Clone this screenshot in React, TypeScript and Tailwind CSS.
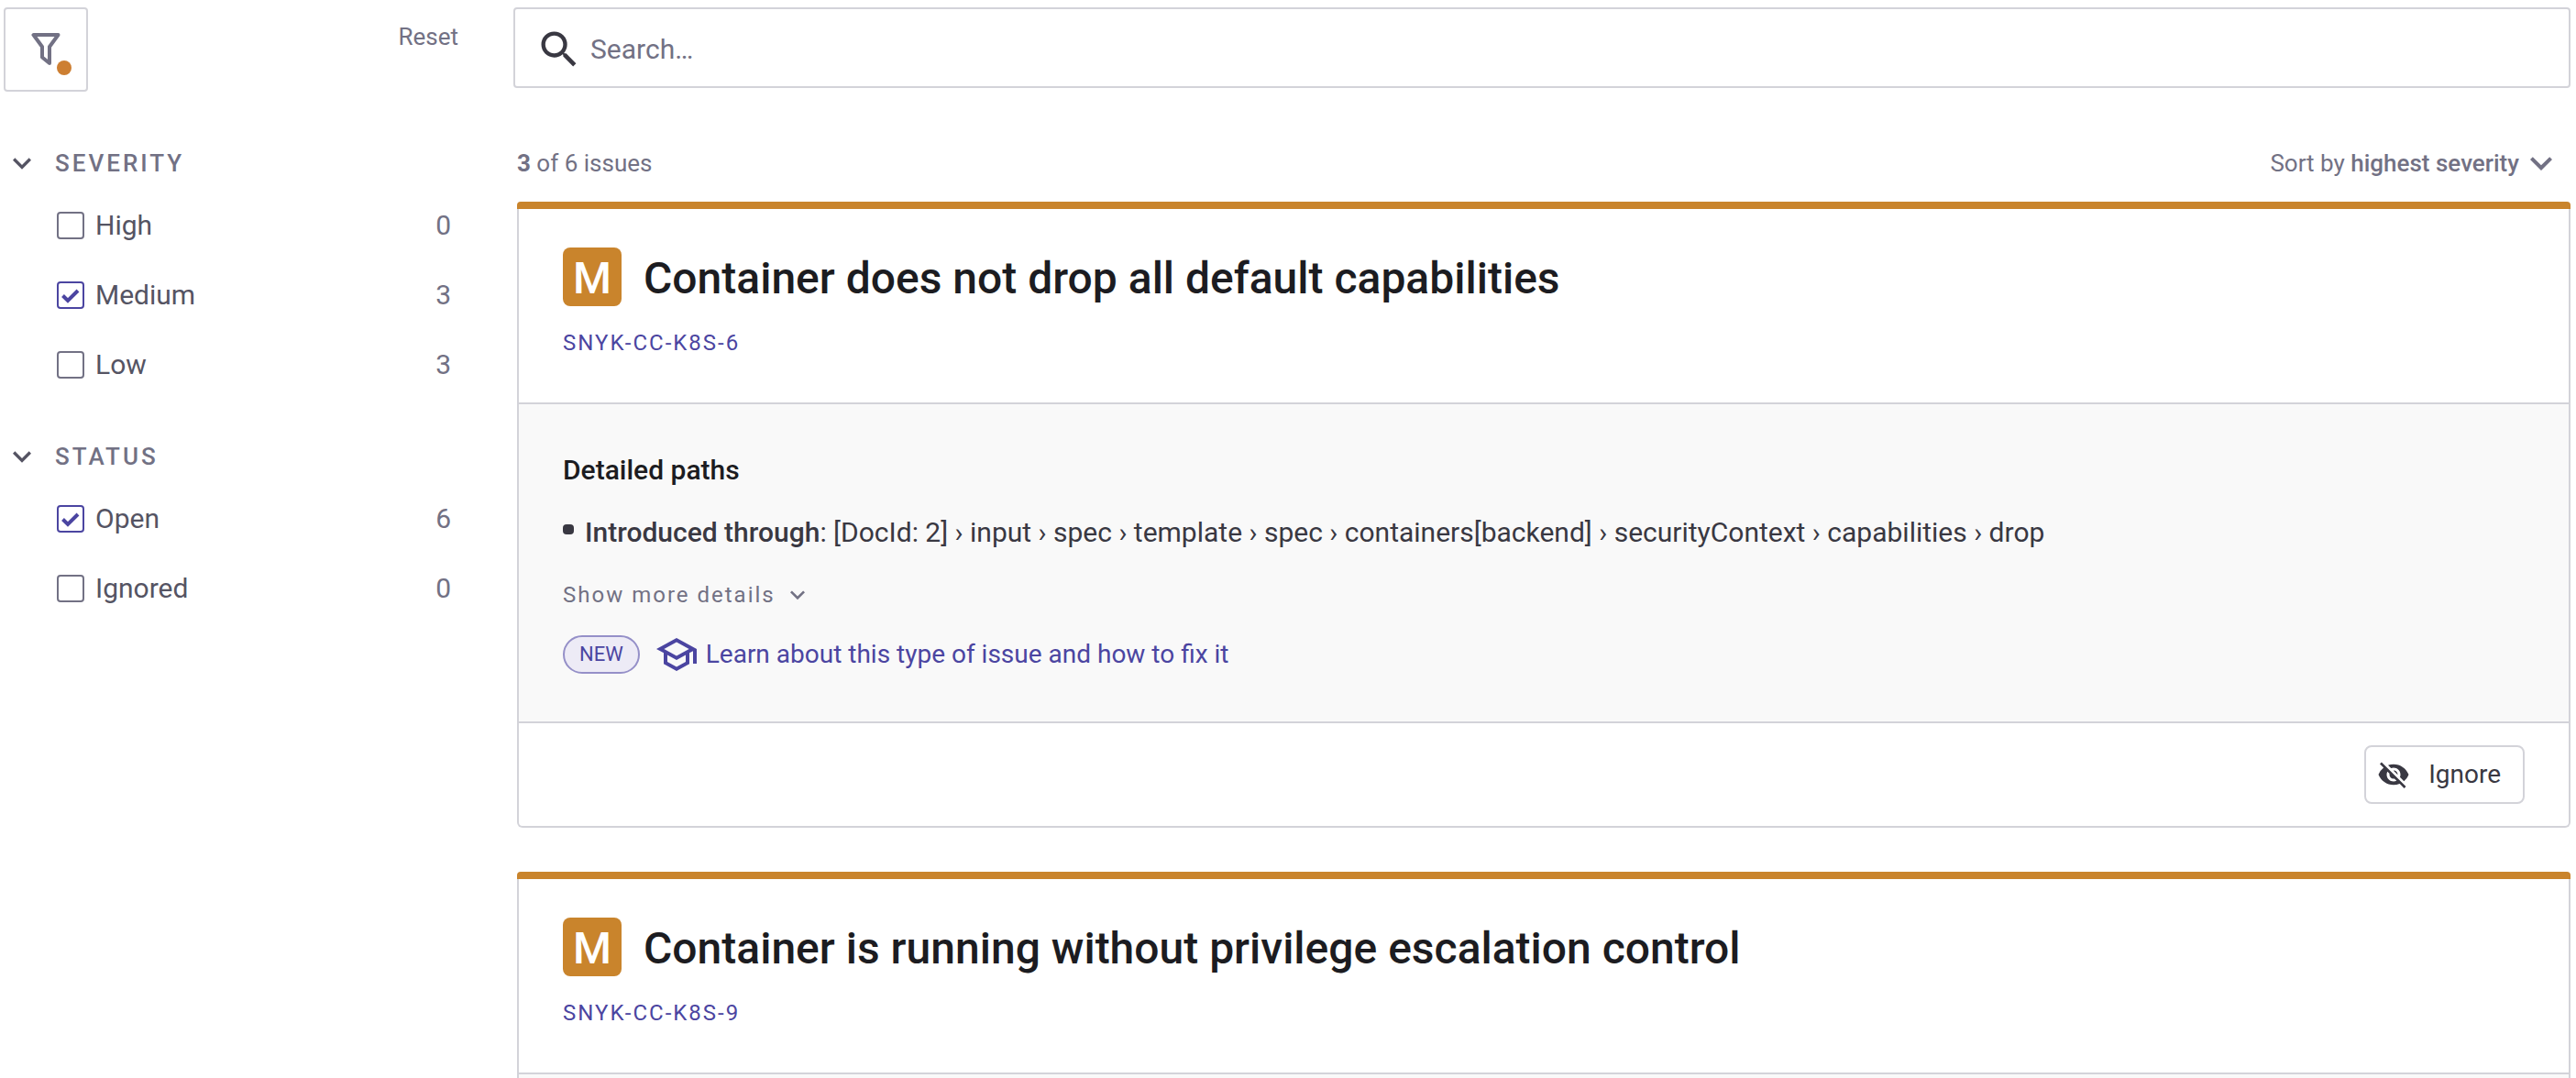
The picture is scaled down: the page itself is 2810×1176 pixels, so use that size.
import { useState } from "react";
import { MdVisibilityOff, MdExpandMore, MdOutlineSchool, MdSearch } from "react-icons/md";

function FunnelIcon() {
  return (
    <svg width="32" height="36" viewBox="0 0 32 36" fill="none" stroke="#727184" strokeWidth="4" strokeLinejoin="round" aria-hidden="true">
      <path d="M2.500 2H29.500L20 15V33L12 26.500V15Z" />
    </svg>
  );
}

function FilterOption({ label, count, initial }: { label: string; count: number; initial: boolean }) {
  const [on, setOn] = useState(initial);
  return (
    <li className="flex h-[76px] items-center justify-between text-[30px]">
      <label className="flex items-center gap-3 text-[#555463]">
        <span className="relative flex size-[30px]">
          <input
            type="checkbox"
            checked={on}
            onChange={() => setOn(!on)}
            className="peer size-[30px] appearance-none rounded border-2 border-[#727184] checked:border-[#4b45a1]"
          />
          <svg viewBox="0 0 30 30" className="pointer-events-none absolute inset-0 hidden peer-checked:block" fill="none" stroke="#4b45a1" strokeWidth="4" aria-hidden="true">
            <path d="M6.500 15.500 12 21 23 10" />
          </svg>
        </span>
        {label}
      </label>
      <span className="text-[#727184]">{count}</span>
    </li>
  );
}

type Option = { label: string; count: number; initial: boolean };

function FilterGroup({ title, options }: { title: string; options: Option[] }) {
  return (
    <section>
      <button className="flex h-10 items-center gap-4 text-[26px] font-medium tracking-[3px] text-[#727184]">
        <MdExpandMore className="size-10 text-[#555463]" />
        {title}
      </button>
      <ul className="mt-2.5 pr-2 pl-[58px]">
        {options.map((o) => (
          <FilterOption key={o.label} {...o} />
        ))}
      </ul>
    </section>
  );
}

function IssueCard({ title, id, path }: { title: string; id: string; path?: string[] }) {
  return (
    <article className="rounded-md border-x-2 border-b-2 border-[#d3d3d9]">
      <div className="-mx-0.5 h-2 rounded-t bg-[#c9842c]" />
      <header className="border-b-2 border-[#d3d3d9] px-12 pt-[42px] pb-12">
        <div className="flex items-center gap-6">
          <span className="flex size-16 items-center justify-center rounded-lg bg-[#c9842c] pt-1 text-5xl font-medium text-white">M</span>
          <h2 className="pt-1 text-5xl font-medium text-[#1c1c21]">{title}</h2>
        </div>
        <a href="#issue" className="mt-6 block w-fit text-2xl leading-[33px] tracking-[2px] text-[#4b45a1]">{id}</a>
      </header>
      <div className="bg-[#f9f9f9] px-12 py-12">
        {path && (
          <>
            <h3 className="text-[30px] leading-12 font-medium text-[#1c1c21]">Detailed paths</h3>
            <ul className="mt-5">
              <li className="flex gap-3 text-[30px] leading-12 text-[#393842]">
                <span className="mt-[15px] h-[11px] w-3 rounded bg-[#393842]" />
                <p>
                  <strong className="font-medium">Introduced through</strong>: {path.join(" › ")}
                </p>
              </li>
            </ul>
            <button className="mt-5 flex h-12 items-center gap-2 text-2xl tracking-[2px] text-[#727184]">
              Show more details
              <MdExpandMore className="size-8" />
            </button>
            <div className="mt-4 flex h-[50px] items-center">
              <span className="flex h-[42px] items-center rounded-full border-2 border-[#9590c8] bg-[#edebf6] px-4 text-[22px] text-[#4b45a1]">NEW</span>
              <a href="#learn" className="ml-4 flex items-center gap-2 text-[#4b45a1]">
                <MdOutlineSchool className="size-12" />
                Learn about this type of issue and how to fix it
              </a>
            </div>
          </>
        )}
      </div>
      {path && (
        <footer className="flex justify-end border-t-2 border-[#d3d3d9] px-12 py-6">
          <button className="flex h-16 items-center gap-5 rounded-lg border-2 border-[#d3d3d9] pr-6 pl-3 text-[#393842]">
            <MdVisibilityOff className="size-9" />
            Ignore
          </button>
        </footer>
      )}
    </article>
  );
}

export default function App() {
  return (
    <div className="flex h-screen overflow-hidden bg-white pt-2 pr-1.5 pl-1 font-[Roboto,sans-serif] text-[28px] leading-10">
      <aside className="mr-[60px] w-[496px] shrink-0">
        <div className="mb-[58px] flex items-start justify-between">
          <button aria-label="Filters" className="relative flex size-[92px] items-center justify-center rounded border-2 border-[#d3d3d9]">
            <FunnelIcon />
            <span className="absolute right-4 bottom-4 size-4 rounded-full bg-[#cd7f32]" />
          </button>
          <button className="mt-3 text-[26px] text-[#727184]">Reset</button>
        </div>
        <div className="flex flex-col gap-[42px]">
          <FilterGroup
            title="SEVERITY"
            options={[
              { label: "High", count: 0, initial: false },
              { label: "Medium", count: 3, initial: true },
              { label: "Low", count: 3, initial: false },
            ]}
          />
          <FilterGroup
            title="STATUS"
            options={[
              { label: "Open", count: 6, initial: true },
              { label: "Ignored", count: 0, initial: false },
            ]}
          />
        </div>
      </aside>
      <main className="min-w-0 grow">
        <label className="flex h-[88px] items-center gap-2 rounded border-2 border-[#d3d3d9] px-[22px] pt-1 text-[30px]">
          <MdSearch className="size-[52px] text-[#393842]" />
          <input type="search" aria-label="Search" placeholder="Search…" className="grow outline-none placeholder:text-[#727184]" />
        </label>
        <div className="pl-1">
          <div className="mt-[62px] flex h-10 items-center justify-between pr-2 text-[26px] text-[#727184]">
            <p>
              <strong className="font-bold">3</strong> of 6 issues
            </p>
            <button className="flex items-center">
              <span>
                Sort by <strong className="font-medium">highest severity</strong>
              </span>
              <MdExpandMore className="size-12" />
            </button>
          </div>
          <div className="mt-[22px] flex flex-col gap-12">
            <IssueCard
              title="Container does not drop all default capabilities"
              id="SNYK-CC-K8S-6"
              path={["[DocId: 2]", "input", "spec", "template", "spec", "containers[backend]", "securityContext", "capabilities", "drop"]}
            />
            <IssueCard title="Container is running without privilege escalation control" id="SNYK-CC-K8S-9" />
          </div>
        </div>
      </main>
    </div>
  );
}
